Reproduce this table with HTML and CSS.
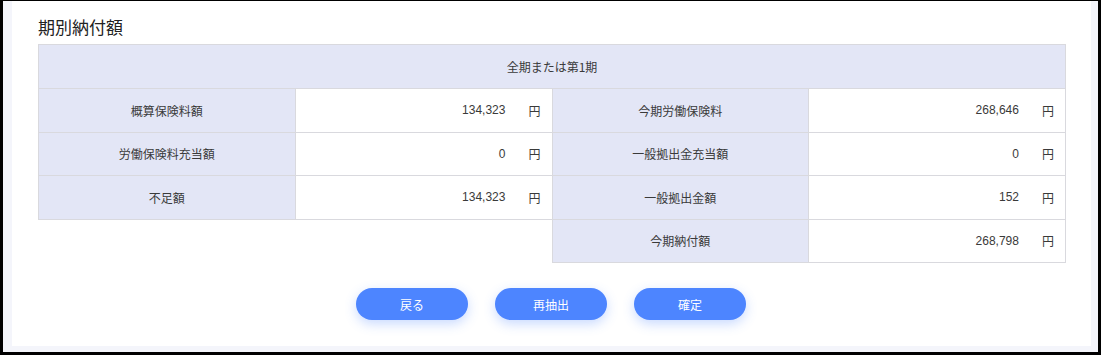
FILE: index.html
```html
<!DOCTYPE html>
<html lang="ja">
<head>
<meta charset="utf-8">
<link rel="stylesheet" href="styles.css">
</head>
<body>
<div class="frame">
  <div class="panel">
    <h2 class="title">期別納付額</h2>
    <table class="grid">
      <tr class="head-row"><th class="head" colspan="4">全期または第1期</th></tr>
      <tr>
        <th>概算保険料額</th>
        <td><div class="val"><span>134,323</span><span class="yen">円</span></div></td>
        <th>今期労働保険料</th>
        <td><div class="val"><span>268,646</span><span class="yen">円</span></div></td>
      </tr>
      <tr>
        <th>労働保険料充当額</th>
        <td><div class="val"><span>0</span><span class="yen">円</span></div></td>
        <th>一般拠出金充当額</th>
        <td><div class="val"><span>0</span><span class="yen">円</span></div></td>
      </tr>
      <tr>
        <th>不足額</th>
        <td><div class="val"><span>134,323</span><span class="yen">円</span></div></td>
        <th>一般拠出金額</th>
        <td><div class="val"><span>152</span><span class="yen">円</span></div></td>
      </tr>
      <tr>
        <td class="empty"></td>
        <td class="empty"></td>
        <th>今期納付額</th>
        <td><div class="val"><span>268,798</span><span class="yen">円</span></div></td>
      </tr>
    </table>
    <div class="actions">
      <button class="btn">戻る</button>
      <button class="btn">再抽出</button>
      <button class="btn">確定</button>
    </div>
  </div>
</div>
</body>
</html>
```

FILE: styles.css
```css
* { box-sizing: border-box; }
html, body { margin: 0; padding: 0; }
body {
  background: #000;
  width: 1101px;
  height: 355px;
  padding: 1px 3px 3px 3px;
  font-family: "Liberation Sans", "Noto Sans CJK JP", sans-serif;
  color: #3a3a3a;
}
.frame {
  background: #f4f5fb;
  height: 100%;
  padding: 0 7px 6px 9px;
}
.panel {
  background: #fff;
  height: 100%;
  padding: 0 25px 0 26px;
}
.title {
  margin: 0;
  padding-top: 14px;
  height: 43px;
  font-family: "Noto Sans CJK JP", sans-serif;
  font-size: 17px;
  font-weight: 400;
  line-height: 24px;
  color: #222;
}
.grid {
  width: 1028px;
  border-collapse: collapse;
  table-layout: fixed;
  font-size: 12px;
}
.grid tr { height: 43.5px; }
.grid tr.head-row { height: 44px; }
.grid th, .grid td {
  border: 1px solid #d9d9de;
  padding: 0;
}
.grid th {
  background: #e3e6f6;
  font-weight: 400;
  text-align: center;
  font-family: "Noto Sans CJK JP", sans-serif;
  color: #3a3a3a;
}
.grid td { background: #fff; }
.grid td.empty { border: none; }
.val {
  display: flex;
  justify-content: flex-end;
  align-items: center;
  padding-right: 11px;
  color: #3a3a3a;
}
.yen {
  margin-left: 23px;
  font-family: "Noto Sans CJK JP", sans-serif;
}
.actions {
  display: flex;
  justify-content: center;
  gap: 27px;
  margin-top: 25px;
  padding-right: 2px;
}
.btn {
  width: 112px;
  height: 32px;
  border: none;
  border-radius: 16px;
  background: #4d85ff;
  color: #fff;
  font-family: "Noto Sans CJK JP", sans-serif;
  font-size: 12px;
  box-shadow: 0 4px 12px rgba(77, 133, 255, 0.3);
  cursor: pointer;
}
```
